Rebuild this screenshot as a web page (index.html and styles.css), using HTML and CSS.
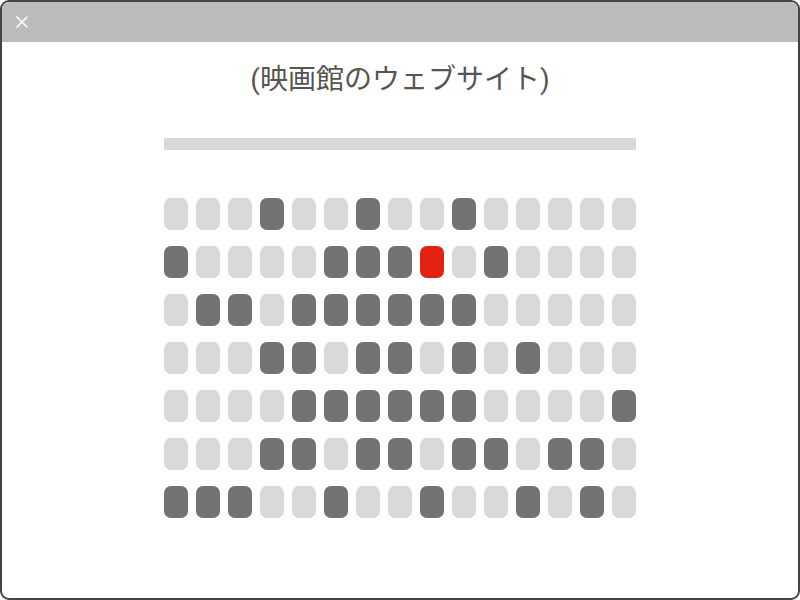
FILE: index.html
```html
<!DOCTYPE html>
<html lang="ja">
<head>
    <meta charset="UTF-8">
    <meta name="viewport" content="width=device-width, initial-scale=1.0">
    <title>映画館のウェブサイト</title>
    <link rel="stylesheet" href="styles.css">
</head>
<body>
    <div class="window">
        <div class="titlebar">
            <button class="close-btn" aria-label="close">
                <svg width="12" height="12" viewBox="0 0 12 12">
                    <path d="M1 1 L11 11 M11 1 L1 11" stroke="#fff" stroke-width="1.6" stroke-linecap="round"/>
                </svg>
            </button>
        </div>
        <div class="content">
            <h1>(映画館のウェブサイト)</h1>
            <div class="screen"></div>
            <div class="seats" id="seats"></div>
        </div>
    </div>
    <script>
        // 0 = free, 1 = taken, 2 = selected
        const seatMap = [
            "000100100100000",
            "100001112010000",
            "011011111100000",
            "000110110101000",
            "000011111100001",
            "000110110110110",
            "111001001001010"
        ];

        const seats = document.getElementById("seats");
        seatMap.forEach(row => {
            for (let c of row) {
                let seat = document.createElement("div");
                seat.classList.add("seat");
                if (c === "1") seat.classList.add("taken");
                if (c === "2") seat.classList.add("selected");
                seats.appendChild(seat);
            }
        });
    </script>
</body>
</html>
```

FILE: styles.css
```css
html, body {
    margin: 0;
    padding: 0;
    background: #fff;
}

body {
    font-family: 'Roboto', 'Noto Sans CJK JP', sans-serif;
    color: #555;
}

.window {
    width: 800px;
    height: 600px;
    box-sizing: border-box;
    border: 2px solid #444;
    border-radius: 9px;
    overflow: hidden;
    background: #fff;
}

.titlebar {
    height: 40px;
    background: #bbb;
    display: flex;
    align-items: center;
    padding-left: 14px;
}

.close-btn {
    width: 12px;
    height: 12px;
    padding: 0;
    border: none;
    background: none;
    display: flex;
    cursor: pointer;
}

.content {
    display: flex;
    flex-direction: column;
    align-items: center;
}

h1 {
    margin: 20px 0 0;
    font-size: 28px;
    font-weight: normal;
    line-height: 36px;
    color: #555;
}

.screen {
    width: 472px;
    height: 12px;
    margin-top: 40px;
    background: #d9d9d9;
}

.seats {
    margin-top: 48px;
    display: grid;
    grid-template-columns: repeat(15, 24px);
    grid-auto-rows: 32px;
    gap: 16px 8px;
}

.seat {
    background: #d9d9d9;
    border-radius: 7px;
}

.seat.taken {
    background: #737373;
}

.seat.selected {
    background: #e32214;
}
```
